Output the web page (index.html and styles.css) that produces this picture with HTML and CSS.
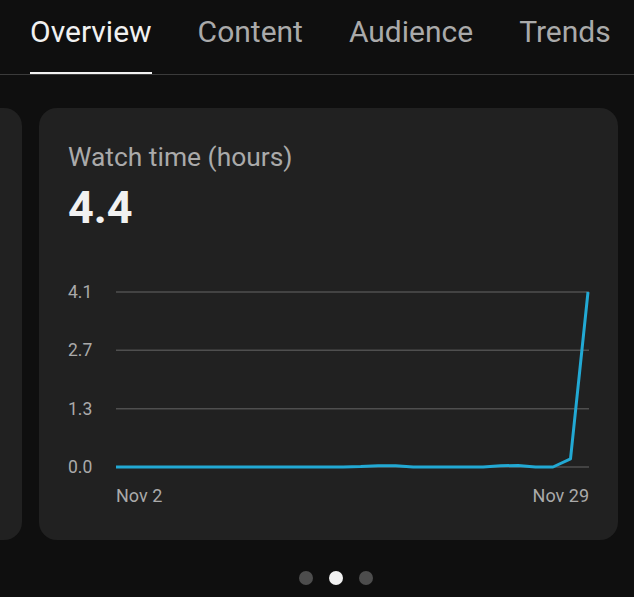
FILE: index.html
```html
<!DOCTYPE html>
<html>
<head>
<meta charset="utf-8">
<link rel="stylesheet" href="styles.css">
</head>
<body>
<nav class="tabs">
  <div class="tab active">Overview</div>
  <div class="tab">Content</div>
  <div class="tab">Audience</div>
  <div class="tab">Trends</div>
</nav>
<div class="viewport">
  <div class="carousel">
    <div class="card"></div>
    <div class="card main">
      <div class="title">Watch time (hours)</div>
      <div class="value">4.4</div>
      <div class="chart">
        <div class="yaxis">
          <span>4.1</span>
          <span>2.7</span>
          <span>1.3</span>
          <span>0.0</span>
        </div>
        <svg class="plot" width="473" height="195" viewBox="0 0 473 195">
          <g stroke="#4f4f4f" stroke-width="1.4">
            <line x1="0" y1="10" x2="473" y2="10"/>
            <line x1="0" y1="68.3" x2="473" y2="68.3"/>
            <line x1="0" y1="126.7" x2="473" y2="126.7"/>
            <line x1="0" y1="185" x2="473" y2="185"/>
          </g>
          <polyline fill="none" stroke="#22a9d4" stroke-width="3" stroke-linejoin="round" points="0,185 227.2,185 244.7,184.6 262.2,183.7 279.7,183.7 297.2,185 367.1,185 384.6,183.8 402,183.4 419.5,185 437,185 454.5,176.9 472,10"/>
        </svg>
        <div class="xaxis">
          <span>Nov 2</span>
          <span>Nov 29</span>
        </div>
      </div>
    </div>
  </div>
</div>
<div class="dots">
  <span class="dot"></span>
  <span class="dot on"></span>
  <span class="dot"></span>
</div>
</body>
</html>
```
FILE: styles.css
```css
html, body {
  margin: 0;
  padding: 0;
  background: #0f0f0f;
}
body {
  width: 634px;
  height: 597px;
  overflow: hidden;
  font-family: Roboto, "Noto Sans", sans-serif;
  color: #f1f1f1;
}
.tabs {
  display: flex;
  gap: 46px;
  padding-left: 30px;
  height: 75px;
  box-sizing: border-box;
  border-bottom: 1px solid #3b3b3b;
  overflow: hidden;
}
.tab {
  height: 75px;
  box-sizing: border-box;
  margin-bottom: -1px;
  padding-top: 15px;
  font-size: 30px;
  line-height: 34px;
  color: #aaaaaa;
  white-space: nowrap;
}
.tab.active {
  color: #f1f1f1;
  border-bottom: 3px solid #f1f1f1;
}
.viewport {
  width: 634px;
  overflow: hidden;
  margin-top: 33px;
}
.carousel {
  display: flex;
  gap: 17px;
  transform: translateX(-557px);
}
.card {
  flex: 0 0 579px;
  height: 432px;
  background: #212121;
  border-radius: 18px;
  box-sizing: border-box;
}
.main {
  padding: 34px 0 0 29px;
}
.title {
  font-size: 26.4px;
  line-height: 30px;
  color: #aaaaaa;
}
.value {
  margin-top: 10px;
  font-size: 45px;
  line-height: 52px;
  font-weight: 700;
  color: #f1f1f1;
}
.chart {
  margin-top: 48px;
  display: grid;
  grid-template-columns: 48px 473px;
}
.yaxis {
  display: flex;
  flex-direction: column;
  justify-content: space-between;
  height: 195px;
  font-size: 17.5px;
  color: #aaaaaa;
}
.yaxis span {
  line-height: 20px;
  height: 20px;
}
.plot {
  display: block;
  overflow: visible;
}
.xaxis {
  grid-column: 2;
  display: flex;
  justify-content: space-between;
  margin-top: 8px;
  font-size: 18px;
  line-height: 22px;
  color: #aaaaaa;
}
.dots {
  display: flex;
  gap: 16px;
  margin: 31px 0 0 299px;
}
.dot {
  width: 14px;
  height: 14px;
  border-radius: 50%;
  background: #4d4d4d;
}
.dot.on {
  background: #f1f1f1;
}
```
